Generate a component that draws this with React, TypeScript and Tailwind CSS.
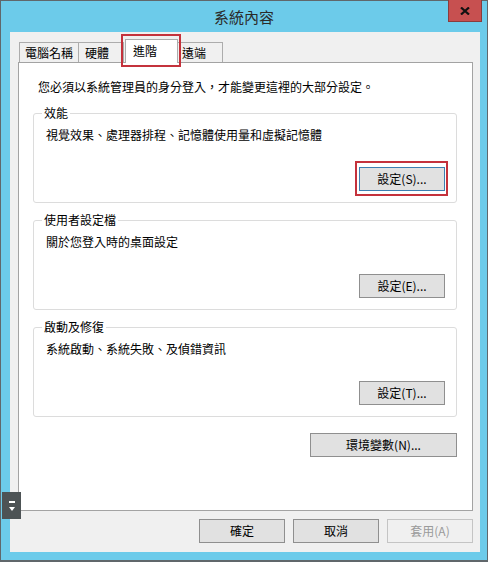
import React from "react";

const btn =
  "flex h-[24px] shrink-0 items-center justify-center border text-[12px] leading-none";
const normal = "border-[#8f8f8f] bg-[#e1e1e1] text-black";

function Group({
  title,
  text,
  button,
  highlight,
  className = "",
}: {
  title: string;
  text: string;
  button: string;
  highlight?: boolean;
  className?: string;
}) {
  return (
    <div
      className={`relative ml-[14px] mr-[15px] flex h-[90px] flex-col justify-between rounded-[3px] border border-[#dcdcdc] pb-[11px] pl-[12px] pr-[11px] pt-[13px] ${className}`}
    >
      <span className="absolute -top-[9px] left-[8px] bg-white px-[2px] leading-4">
        {title}
      </span>
      <p className="leading-4">{text}</p>
      <div className="flex justify-end">
        {highlight ? (
          <div className="relative">
            <button className={`${btn} w-[86px] border-[#3c7fb1] bg-[#e1e1e1] text-black`}>
              {button}
            </button>
            <span className="pointer-events-none absolute -bottom-[5px] -left-[4px] -right-[3px] -top-[6px] border-2 border-[#c4323c]" />
          </div>
        ) : (
          <button className={`${btn} ${normal} w-[86px]`}>{button}</button>
        )}
      </div>
    </div>
  );
}

export default function App() {
  return (
    <div className="relative flex h-[562px] w-[488px] flex-col border border-b-2 border-[#60676b] bg-[#6ccbea] font-['Noto_Sans_CJK_TC','Liberation_Sans',sans-serif] text-[12px] text-black">
      <div className="relative flex h-[31px] shrink-0 items-center justify-center">
        <span className="text-[15px] leading-none text-[#2b2b2b]">系統內容</span>
        <div className="absolute -top-px right-[5px] flex h-[22px] w-[34px] items-center justify-center border border-t-0 border-[#8a3c3c] bg-[#c75050]">
          <svg width="10" height="8" viewBox="0 0 10 8">
            <path d="M1 0.5 L9 7.5 M9 0.5 L1 7.5" stroke="#111" strokeWidth="2.2" />
          </svg>
        </div>
      </div>

      <div className="ml-[9px] mr-[7px] flex h-[520px] flex-col bg-[#f0f0f0] pb-[9px] pl-[8px] pr-[7px] pt-[8px]">
        <div className="flex h-[22px] shrink-0 items-end pl-px">
          <div className="flex h-[20px] w-[60px] items-center border border-b-0 border-[#acacac] bg-[#f0f0f0] pl-[5px]">
            電腦名稱
          </div>
          <div className="-ml-px flex h-[20px] w-[46px] items-center border border-b-0 border-[#acacac] bg-[#f0f0f0] pl-[6px]">
            硬體
          </div>
          <div className="relative z-10 -mb-px ml-px">
            <div className="flex h-[24px] w-[53px] items-start border border-b-0 border-[#acacac] bg-white pl-[7px] pt-[2px]">
              進階
            </div>
            <span className="pointer-events-none absolute -bottom-[4px] -left-[4px] -right-[3px] -top-[5px] border-2 border-[#c4323c]" />
          </div>
          <div className="-ml-px flex h-[20px] w-[46px] items-center border border-b-0 border-[#acacac] bg-[#f0f0f0] pl-[4px]">
            遠端
          </div>
        </div>

        <div className="flex flex-1 flex-col border border-[#a3a3a3] bg-white pt-[16px]">
          <p className="pl-[19px] leading-4">
            您必須以系統管理員的身分登入，才能變更這裡的大部分設定。
          </p>
          <Group
            className="mt-[18px]"
            title="效能"
            text="視覺效果、處理器排程、記憶體使用量和虛擬記憶體"
            button="設定(S)..."
            highlight
          />
          <Group
            className="mt-[17px]"
            title="使用者設定檔"
            text="關於您登入時的桌面設定"
            button="設定(E)..."
          />
          <Group
            className="mt-[17px]"
            title="啟動及修復"
            text="系統啟動、系統失敗、及偵錯資訊"
            button="設定(T)..."
          />
          <div className="mr-[15px] mt-[16px] flex justify-end">
            <button className={`${btn} ${normal} w-[147px]`}>環境變數(N)...</button>
          </div>
        </div>

        <div className="mt-[8px] flex justify-end gap-[8px]">
          <button className={`${btn} ${normal} w-[86px]`}>確定</button>
          <button className={`${btn} ${normal} w-[86px]`}>取消</button>
          <button className={`${btn} w-[86px] border-[#c4c4c4] bg-[#f0f0f0] text-[#9a9a9a]`}>
            套用(A)
          </button>
        </div>
      </div>

      <div className="absolute left-[1px] top-[491px] flex h-[27px] w-[19px] flex-col items-center justify-center gap-[4px] bg-[#4d5355]">
        <span className="h-[2px] w-[6px] bg-white" />
        <svg width="6" height="4" viewBox="0 0 6 4">
          <path d="M0 0 H6 L3 4 Z" fill="#fff" />
        </svg>
      </div>
    </div>
  );
}
